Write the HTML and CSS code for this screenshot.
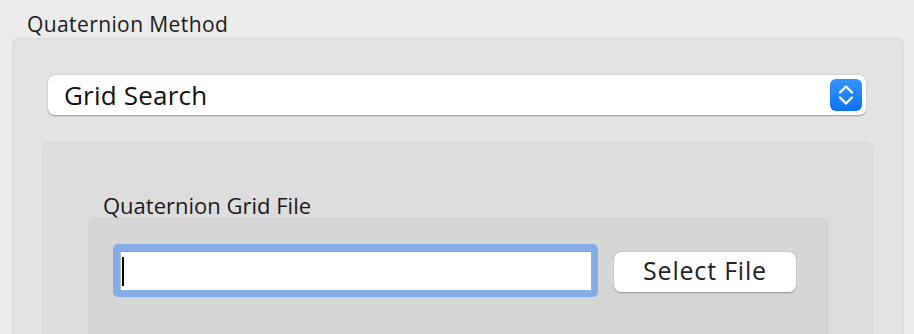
FILE: index.html
```html
<!DOCTYPE html>
<html lang="en">
<head>
    <meta charset="UTF-8">
    <title>Quaternion Method</title>
    <link rel="stylesheet" href="styles.css">
</head>
<body>
    <section class="panel">
        <div class="group-title">Quaternion Method</div>
        <div class="group-box">
            <div class="popup">
                <span class="popup-label">Grid Search</span>
                <span class="popup-stepper">
                    <svg width="18" height="24" viewBox="0 0 18 24">
                        <path d="M3 9.5 L9 3.5 L15 9.5" fill="none" stroke="#fff" stroke-width="2.2" stroke-linecap="round" stroke-linejoin="round"/>
                        <path d="M3 14.5 L9 20.5 L15 14.5" fill="none" stroke="#fff" stroke-width="2.2" stroke-linecap="round" stroke-linejoin="round"/>
                    </svg>
                </span>
            </div>
            <div class="tab-box">
                <div class="sub-title">Quaternion Grid File</div>
                <div class="sub-box">
                    <div class="file-field">
                        <span class="caret"></span>
                    </div>
                    <button class="select-btn">Select File</button>
                </div>
            </div>
        </div>
    </section>
</body>
</html>
```

FILE: styles.css
```css
* {
    box-sizing: border-box;
}
html, body {
    margin: 0;
    height: 100%;
    overflow: hidden;
}
body {
    background: #ececec;
    font-family: "Open Sans", "Liberation Sans", sans-serif;
    color: #1a1a1a;
}
.panel {
    padding: 12px 10px 0 12px;
}
.group-title {
    font-size: 21px;
    line-height: 24px;
    letter-spacing: 0.4px;
    margin: 0 0 2px 15px;
    height: 24px;
}
.group-box {
    background: #e3e3e3;
    border: 1px solid #dadada;
    border-bottom: 0;
    border-radius: 6px 6px 0 0;
    padding: 36px 30px 0 29px;
    height: 320px;
}
.popup {
    display: flex;
    align-items: center;
    justify-content: space-between;
    height: 40px;
    margin: 0 7px 0 6px;
    padding: 0 4px 0 16px;
    background: #fff;
    border-radius: 7px;
    box-shadow: 0 0.5px 1.5px rgba(0, 0, 0, 0.35);
}
.popup-label {
    font-size: 26px;
    line-height: 30px;
    letter-spacing: 0.2px;
    color: #111;
}
.popup-stepper {
    display: flex;
    align-items: center;
    justify-content: center;
    width: 32px;
    height: 32px;
    border-radius: 6px;
    background: linear-gradient(#3594ff, #0b74f2);
}
.tab-box {
    margin-top: 27px;
    background: #dddddd;
    border: 1px solid #d6d6d6;
    border-bottom: 0;
    border-radius: 6px 6px 0 0;
    padding: 49px 44px 0 46px;
    height: 220px;
}
.sub-title {
    font-size: 22px;
    line-height: 26px;
    margin-left: 14px;
    height: 26px;
}
.sub-box {
    display: flex;
    align-items: flex-start;
    gap: 16px;
    background: #d6d6d6;
    border: 1px solid #cfcfcf;
    border-bottom: 0;
    border-radius: 6px 6px 0 0;
    padding: 25px 0 0 23px;
    height: 140px;
}
.file-field {
    width: 485px;
    height: 53px;
    border: 7px solid #86aee6;
    border-radius: 5px;
    background: #fff;
    box-shadow: inset 0 1px 0 #9a9a9a, inset 1px 0 0 #bdbdbd;
    padding: 6px 0 0 2px;
}
.caret {
    display: block;
    width: 2px;
    height: 29px;
    background: #000;
}
.select-btn {
    margin-top: 8px;
    width: 182px;
    height: 40px;
    border: 0;
    border-radius: 7px;
    background: #fff;
    box-shadow: 0 0.5px 1.5px rgba(0, 0, 0, 0.35);
    font-family: inherit;
    font-size: 25px;
    line-height: 30px;
    letter-spacing: 0.8px;
    color: #222;
    padding: 0 0 5px;
}
```
